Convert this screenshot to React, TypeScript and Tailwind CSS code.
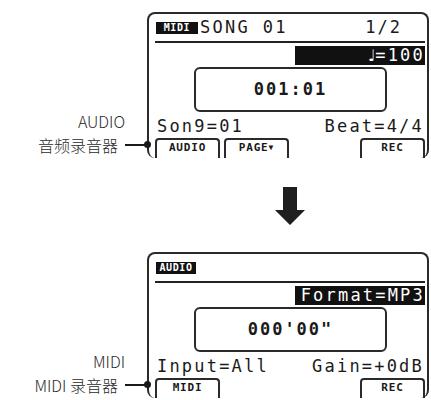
import React from "react";

const lcdFont = { fontFamily: '"DejaVu Sans Mono", "Liberation Mono", monospace' };

type Screen = {
  badge: string;
  badgeWidth: string;
  title: string;
  page: string;
  bar: React.ReactNode;
  time: string;
  left: string;
  right: string;
  buttons: { label: React.ReactNode; push?: boolean }[];
  labelTop: string;
  labelBottom: string;
};

const screens: Screen[] = [
  {
    badge: "MIDI",
    badgeWidth: "w-[42px]",
    title: "SONG 01",
    page: "1/2",
    bar: (
      <>
        <span className="font-['DejaVu_Sans'] text-[16px] tracking-normal">♩</span>=100
      </>
    ),
    time: "001:01",
    left: "Son9=01",
    right: "Beat=4/4",
    buttons: [
      { label: "AUDIO" },
      {
        label: (
          <>
            PAGE<span className="text-[8px] align-[1px]">▼</span>
          </>
        ),
      },
      { label: "REC", push: true },
    ],
    labelTop: "AUDIO",
    labelBottom: "音频录音器",
  },
  {
    badge: "AUDIO",
    badgeWidth: "w-[40px]",
    title: "",
    page: "",
    bar: "Format=MP3",
    time: "000'00\"",
    left: "Input=All",
    right: "Gain=+0dB",
    buttons: [{ label: "MIDI" }, { label: "REC", push: true }],
    labelTop: "MIDI",
    labelBottom: "MIDI 录音器",
  },
];

function Lcd({ s }: { s: Screen }) {
  return (
    <div className="flex">
      {/* caption on the left */}
      <div
        className="w-[147px] flex flex-col items-end justify-end pb-[1px] text-[16px] font-light text-[#2b2b2b] leading-[24px]"
        style={{ fontFamily: '"Noto Sans CJK SC", "Noto Sans", sans-serif' }}
      >
        <div className="pr-[22px]">{s.labelTop}</div>
        <div className="flex items-center">
          <span>{s.labelBottom}</span>
          <span className="ml-[7px] w-[22px] h-[1.5px] bg-[#1a1a1a]" />
        </div>
      </div>

      {/* screen */}
      <div
        className="relative w-[282px] h-[146px] border-2 border-b-0 border-[#2a2a2a] rounded-[8px] flex flex-col pl-[6px] pr-[2px] text-[#1a1a1a]"
        style={lcdFont}
      >
        <span className="absolute left-[-5px] top-[127px] w-[7px] h-[7px] rounded-full bg-[#1a1a1a]" />

        <div className="mt-[7px] h-[13px] flex items-center">
          <span
            className={`${s.badgeWidth} h-[12px] bg-[#111] text-white text-[10px] font-bold leading-[12px] text-center tracking-[0.6px] ml-[1px]`}
          >
            {s.badge}
          </span>
          <span className="ml-[2px] text-[17px] tracking-[2.3px] leading-none">{s.title}</span>
          <span className="ml-auto mr-[23px] text-[17px] tracking-[2px] leading-none">{s.page}</span>
        </div>

        <div className="mt-[7px] h-[2px] bg-[#222]" />

        <div className="mt-[3px] self-end w-[130px] h-[19px] bg-[#111] text-white text-[17px] tracking-[2.2px] leading-[19px] text-right whitespace-nowrap overflow-hidden">
          {s.bar}
        </div>

        <div className="mt-[2px] ml-[39px] w-[193px] h-[45px] border-2 border-[#2a2a2a] rounded-[6px] flex items-center justify-center text-[17px] font-bold tracking-[2px]">
          {s.time}
        </div>

        <div className="mt-[6px] h-[16px] flex items-center justify-between pl-[2px] pr-[1px] text-[17px] tracking-[2.2px] leading-none">
          <span>{s.left}</span>
          <span>{s.right}</span>
        </div>

        <div className="flex-1 flex items-end gap-[4px] mt-[4px]">
          {s.buttons.map((b, i) => (
            <div
              key={i}
              className={
                b.push
                  ? "ml-auto w-[65px] h-[20px] border-2 border-b-0 border-[#2a2a2a] rounded-t-[4px] text-center text-[11px] font-bold tracking-[0.8px] leading-[16px]"
                  : "w-[65px] h-[20px] border-2 border-b-0 border-[#2a2a2a] rounded-t-[4px] text-center text-[11px] font-bold tracking-[0.8px] leading-[16px]"
              }
            >
              {b.label}
            </div>
          ))}
        </div>
      </div>
    </div>
  );
}

export default function App() {
  return (
    <div className="w-[431px] h-[400px] bg-white pt-[12px] overflow-hidden">
      <Lcd s={screens[0]} />
      <div className="h-[94px] pl-[275px] pt-[29px]">
        <svg width="30" height="38" viewBox="0 0 30 38">
          <polygon points="8,0 22,0 22,23 30,23 15,38 0,23 8,23" fill="#1f1f1f" />
        </svg>
      </div>
      <Lcd s={screens[1]} />
    </div>
  );
}
